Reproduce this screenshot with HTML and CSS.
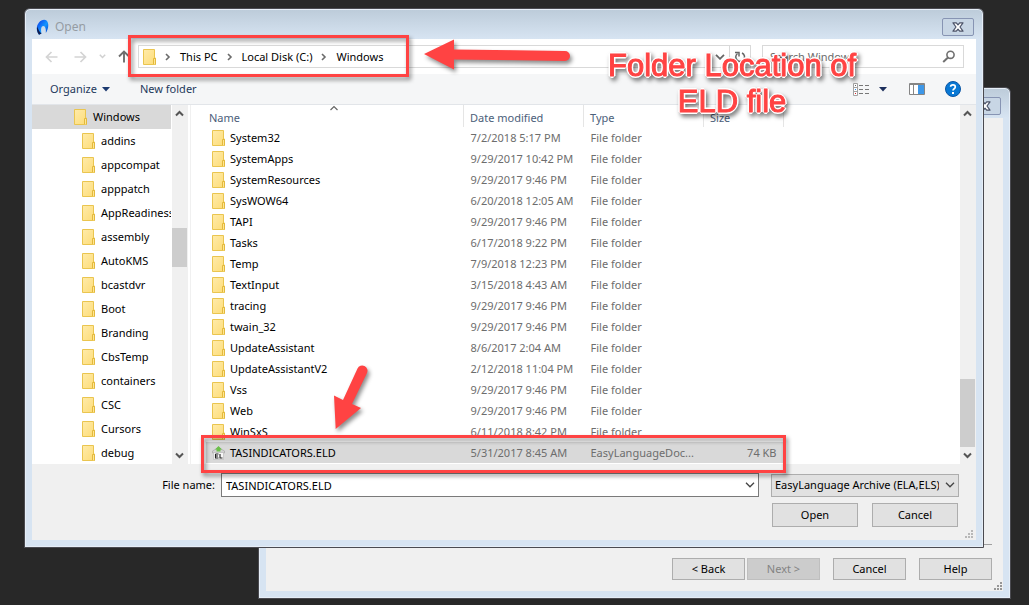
FILE: index.html
```html
<!DOCTYPE html>
<html lang="en">
<head>
<meta charset="utf-8">
<title>Open</title>
<link rel="stylesheet" href="styles.css">
</head>
<body>
<svg class="defs" aria-hidden="true">
  <defs>
    <linearGradient id="folder-fill" x1="0" y1="0" x2="1" y2="1"><stop offset="0" stop-color="#ffebaa"/><stop offset="1" stop-color="#fddc77"/></linearGradient>
    <symbol id="folder" viewBox="0 0 13 16"><path d="M.5 .5H11.500V9H12.500V15.500H.5Z" fill="url(#folder-fill)" stroke="#eac54f"/><path d="M10.500 15V9.500H12.500V15.500" fill="#ffe694" stroke="#e3b93c"/></symbol>
    <symbol id="crumb" viewBox="0 0 6 8"><path d="M1 1L4 4L1 7" fill="none" stroke="#6b6b6b" stroke-width="1.600"/></symbol>
    <symbol id="down" viewBox="0 0 10 6"><path d="M1 .8L5 4.800L9 .8" fill="none" stroke="currentColor" stroke-width="1.300"/></symbol>
    <symbol id="scroll-up" viewBox="0 0 9 7"><path d="M1 5.500L4.500 2L8 5.500" fill="none" stroke="#555" stroke-width="2"/></symbol>
    <symbol id="scroll-down" viewBox="0 0 9 7"><path d="M1 1.500L4.500 5L8 1.500" fill="none" stroke="#555" stroke-width="2"/></symbol>
    <symbol id="close" viewBox="0 0 12 10"><path d="M1 .8H4.300L6 2.800L7.700 .8H11L8 5L11 9.200H7.700L6 7.200L4.300 9.200H1L4 5Z" fill="#fff" stroke="#4b5268" stroke-width="1.200" stroke-linejoin="round"/></symbol>
    <symbol id="grip" viewBox="0 0 9 9"><path d="M6 0h2v2h-2zM3 3h2v2h-2zM6 3h2v2h-2zM0 6h2v2h-2zM3 6h2v2h-2zM6 6h2v2h-2z" fill="currentColor"/></symbol>
  </defs>
</svg>

<main class="desktop">
  <section class="window wizard" aria-label="Import wizard">
    <header class="titlebar"><span></span><button class="close" aria-label="Close wizard"><svg><use href="#close"/></svg></button></header>
    <div class="client wizard-client">
      <div class="wizard-buttons">
        <button class="btn">&lt; Back</button>
        <button class="btn" disabled>Next &gt;</button>
        <button class="btn apart">Cancel</button>
        <button class="btn apart">Help</button>
      </div>
      <svg class="grip"><use href="#grip"/></svg>
    </div>
  </section>

  <section class="window dialog" role="dialog" aria-labelledby="dialog-title">
    <header class="titlebar">
      <span class="title"><svg class="logo" viewBox="0 0 13 17"><defs><linearGradient id="lg" x1="0" y1="0" x2="1" y2="1"><stop offset="0" stop-color="#0a35e8"/><stop offset=".55" stop-color="#1596ff"/><stop offset="1" stop-color="#0530c8"/></linearGradient></defs><path d="M3 15.800C0 12 0 7 3 3.500C5 1 8.500 0 10.500 1.500C13 4 13 9 9.800 14C10.300 10.500 9.300 7 7.300 7C4.800 7.200 4.800 11 5.500 14.500Z" fill="url(#lg)"/><path d="M3 15.800C1 13 .5 10 1.300 7.500C2 10 3.500 13 5.500 14.500Z" fill="#101c50"/></svg><span id="dialog-title">Open</span></span>
      <button class="close" aria-label="Close"><svg><use href="#close"/></svg></button>
    </header>
    <div class="client">
      <nav class="navbar" aria-label="Location">
        <div class="history">
          <button aria-label="Back"><svg width="13" height="12" viewBox="0 0 13 12"><path d="M12.500 6H1.500M6.500 1L1.500 6L6.500 11" fill="none" stroke="#d4d4d4" stroke-width="1.700"/></svg></button>
          <button aria-label="Forward"><svg width="13" height="12" viewBox="0 0 13 12"><path d="M.5 6H11.500M6.500 1L11.500 6L6.500 11" fill="none" stroke="#d4d4d4" stroke-width="1.700"/></svg></button>
          <button aria-label="Recent locations" class="recent"><svg width="7" height="5" viewBox="0 0 7 5"><path d="M.8 .8L3.500 3.500L6.200 .8" fill="none" stroke="#d0d0d0" stroke-width="1.500"/></svg></button>
          <button aria-label="Up"><svg width="12" height="13" viewBox="0 0 12 13"><path d="M6 12.500V1.500M1 6.500L6 1.500L11 6.500" fill="none" stroke="#6e6e6e" stroke-width="1.900"/></svg></button>
        </div>
        <div class="address">
          <svg class="folder"><use href="#folder"/></svg>
          <svg class="crumb"><use href="#crumb"/></svg><a href="#">This PC</a>
          <svg class="crumb"><use href="#crumb"/></svg><a href="#">Local Disk (C:)</a>
          <svg class="crumb"><use href="#crumb"/></svg><a href="#">Windows</a>
          <button class="address-drop" aria-label="Previous locations"><svg width="10" height="6" viewBox="0 0 10 6"><path d="M1 .8L5 4.800L9 .8" fill="none" stroke="#666" stroke-width="1.800"/></svg></button>
          <button class="refresh" aria-label="Refresh"><svg width="12" height="12" viewBox="0 0 12 12"><path d="M8 2A4.400 4.400 0 1 1 3.500 2.500" fill="none" stroke="#666" stroke-width="1.500"/><path d="M1 1.500H5V5.500" fill="none" stroke="#666" stroke-width="1.500"/></svg></button>
        </div>
        <div class="search">
          <input type="search" placeholder="Search Windows" aria-label="Search Windows">
          <svg width="14" height="13" viewBox="0 0 14 13"><circle cx="8.500" cy="4.800" r="3.600" fill="none" stroke="#707070" stroke-width="1.600"/><path d="M6 7.500L1.200 12" stroke="#707070" stroke-width="2"/></svg>
        </div>
      </nav>

      <div class="toolbar">
        <button class="tool">Organize <svg width="8" height="5" viewBox="0 0 8 5"><path d="M0 0H8L4 4.500Z" fill="#1c3a70"/></svg></button>
        <button class="tool">New folder</button>
        <span class="spacer"></span>
        <button class="tool view" aria-label="Change your view"><svg width="17" height="13" viewBox="0 0 17 13"><path d="M.5 .5H4.500V12.500H.5ZM.5 4.500H4.500M.5 8.500H4.500" fill="#fff" stroke="#a3a3a3"/><path d="M2 2h1v1h-1z" fill="#666"/><path d="M2 6h1v1h-1z" fill="#2684e8"/><path d="M2 10h1v1h-1z" fill="#d22"/><path d="M6 2.500H10M12 2.500H16M6 6.500H10M12 6.500H16M6 10.500H10M12 10.500H16" stroke="#777"/></svg><svg width="8" height="5" viewBox="0 0 8 5"><path d="M0 0H8L4 4.500Z" fill="#1c2f5c"/></svg></button>
        <button class="tool" aria-label="Show the preview pane"><svg width="16" height="12" viewBox="0 0 16 12"><path d="M.5 .5H15.500V11.500H.5Z" fill="#fff" stroke="#858585"/><path d="M1 1.500H15M4.500 2V11" stroke="#858585"/><path d="M9 2H15V11H9Z" fill="#3d97e8"/></svg></button>
        <button class="tool help" aria-label="Help"><svg width="16" height="16" viewBox="0 0 16 16"><circle cx="8" cy="8" r="7.500" fill="#0878d4" stroke="#0a55a4"/><path d="M5.600 5.800C5.700 3.300 10.300 3.200 10.300 6C10.300 7.800 8 7.600 8 9.600" fill="none" stroke="#fff" stroke-width="1.700"/><path d="M7 11h2v2h-2z" fill="#fff"/></svg></button>
      </div>

      <div class="browser">
        <ul class="tree">
          <li class="root"><svg class="folder"><use href="#folder"/></svg>Windows</li>
          <li><svg class="folder"><use href="#folder"/></svg>addins</li>
          <li><svg class="folder"><use href="#folder"/></svg>appcompat</li>
          <li><svg class="folder"><use href="#folder"/></svg>apppatch</li>
          <li><svg class="folder"><use href="#folder"/></svg>AppReadiness</li>
          <li><svg class="folder"><use href="#folder"/></svg>assembly</li>
          <li><svg class="folder"><use href="#folder"/></svg>AutoKMS</li>
          <li><svg class="folder"><use href="#folder"/></svg>bcastdvr</li>
          <li><svg class="folder"><use href="#folder"/></svg>Boot</li>
          <li><svg class="folder"><use href="#folder"/></svg>Branding</li>
          <li><svg class="folder"><use href="#folder"/></svg>CbsTemp</li>
          <li><svg class="folder"><use href="#folder"/></svg>containers</li>
          <li><svg class="folder"><use href="#folder"/></svg>CSC</li>
          <li><svg class="folder"><use href="#folder"/></svg>Cursors</li>
          <li><svg class="folder"><use href="#folder"/></svg>debug</li>
        </ul>
        <div class="scrollbar tree-scroll"><svg><use href="#scroll-up"/></svg><div class="track"><span class="thumb"></span></div><svg><use href="#scroll-down"/></svg></div>
        <div class="files">
          <table>
            <colgroup><col class="c-name"><col class="c-date"><col class="c-type"><col class="c-size"></colgroup>
            <thead><tr><th>Name<svg class="sort" viewBox="0 0 10 6"><path d="M1.500 5L5 1.500L8.500 5" fill="none" stroke="#666" stroke-width="1.200"/></svg></th><th>Date modified</th><th>Type</th><th>Size</th></tr></thead>
            <tbody>
              <tr><td><span><svg class="folder"><use href="#folder"/></svg>System32</span></td><td>7/2/2018 5:17 PM</td><td>File folder</td><td></td></tr>
              <tr><td><span><svg class="folder"><use href="#folder"/></svg>SystemApps</span></td><td>9/29/2017 10:42 PM</td><td>File folder</td><td></td></tr>
              <tr><td><span><svg class="folder"><use href="#folder"/></svg>SystemResources</span></td><td>9/29/2017 9:46 PM</td><td>File folder</td><td></td></tr>
              <tr><td><span><svg class="folder"><use href="#folder"/></svg>SysWOW64</span></td><td>6/20/2018 12:05 AM</td><td>File folder</td><td></td></tr>
              <tr><td><span><svg class="folder"><use href="#folder"/></svg>TAPI</span></td><td>9/29/2017 9:46 PM</td><td>File folder</td><td></td></tr>
              <tr><td><span><svg class="folder"><use href="#folder"/></svg>Tasks</span></td><td>6/17/2018 9:22 PM</td><td>File folder</td><td></td></tr>
              <tr><td><span><svg class="folder"><use href="#folder"/></svg>Temp</span></td><td>7/9/2018 12:23 PM</td><td>File folder</td><td></td></tr>
              <tr><td><span><svg class="folder"><use href="#folder"/></svg>TextInput</span></td><td>3/15/2018 4:43 AM</td><td>File folder</td><td></td></tr>
              <tr><td><span><svg class="folder"><use href="#folder"/></svg>tracing</span></td><td>9/29/2017 9:46 PM</td><td>File folder</td><td></td></tr>
              <tr><td><span><svg class="folder"><use href="#folder"/></svg>twain_32</span></td><td>9/29/2017 9:46 PM</td><td>File folder</td><td></td></tr>
              <tr><td><span><svg class="folder"><use href="#folder"/></svg>UpdateAssistant</span></td><td>8/6/2017 2:04 AM</td><td>File folder</td><td></td></tr>
              <tr><td><span><svg class="folder"><use href="#folder"/></svg>UpdateAssistantV2</span></td><td>2/12/2018 11:04 PM</td><td>File folder</td><td></td></tr>
              <tr><td><span><svg class="folder"><use href="#folder"/></svg>Vss</span></td><td>9/29/2017 9:46 PM</td><td>File folder</td><td></td></tr>
              <tr><td><span><svg class="folder"><use href="#folder"/></svg>Web</span></td><td>9/29/2017 9:46 PM</td><td>File folder</td><td></td></tr>
              <tr><td><span><svg class="folder"><use href="#folder"/></svg>WinSxS</span></td><td>6/11/2018 8:42 PM</td><td>File folder</td><td></td></tr>
              <tr class="selected"><td><span><svg class="folder" viewBox="0 0 13 16"><path d="M.5 6L6.500 2.500L12.500 6V8H.5Z" fill="#d2d2d2" stroke="#a8a8a8" stroke-width=".7"/><path d="M1.500 7.500H11.500V14.500H1.500Z" fill="#f6f6f6" stroke="#b5b5b5" stroke-width=".6"/><path d="M6.500 1L10 4.500H8.500V6.500H4.500V4.500H3Z" fill="#6cc04a"/><path d="M3.500 9V13H6.500M3.500 9H6.500M3.500 11H6M8 9V13H10.500" fill="none" stroke="#222" stroke-width="1.100"/></svg>TASINDICATORS.ELD</span></td><td>5/31/2017 8:45 AM</td><td>EasyLanguageDoc...</td><td>74 KB</td></tr>
            </tbody>
          </table>
        </div>
        <div class="scrollbar file-scroll"><svg><use href="#scroll-up"/></svg><div class="track"><span class="thumb"></span></div><svg><use href="#scroll-down"/></svg></div>
      </div>

      <form class="footer">
        <label for="filename">File name:</label>
        <div class="combo"><input id="filename" type="text" value="TASINDICATORS.ELD"><svg class="chev"><use href="#down"/></svg></div>
        <div class="combo filter"><select aria-label="File type"><option>EasyLanguage Archive (ELA,ELS)</option></select><svg class="chev"><use href="#down"/></svg></div>
        <div class="actions"><button type="button" class="btn">Open</button><button type="button" class="btn">Cancel</button></div>
        <svg class="grip"><use href="#grip"/></svg>
      </form>
    </div>
  </section>

  <div class="mark mark-address"></div>
  <div class="mark mark-file"></div>
  <svg class="arrow arrow-left" viewBox="0 0 150 34"><path d="M4 16L34 1.500V11.500L145 13A5 5 0 0 1 145 23L34 21.500V31.500Z" fill="#ff4343"/></svg>
  <svg class="arrow arrow-down" viewBox="0 0 38 70"><path d="M5.700 67L4 33.500L13 38L27.500 6.500A5 5 0 0 1 37 11L22 42L31 46Z" fill="#ff4343"/></svg>
  <p class="note">Folder Location of<br>ELD file</p>
</main>
</body>
</html>
```
FILE: styles.css
```css
* { box-sizing: border-box; }
body {
  margin: 0;
  background: #282828;
  color: #000;
  font: 11px/16px "Noto Sans", "Open Sans", sans-serif;
}
button, input, select { font: inherit; color: inherit; margin: 0; }
button { padding: 0; border: 0; background: none; }
svg { display: block; flex: none; }
.defs { position: absolute; width: 0; height: 0; }
.desktop { position: relative; min-height: 100vh; overflow: hidden; }

/* Windows */
.window {
  position: absolute;
  display: flex;
  flex-direction: column;
  padding: 0 7px 7px;
  border: 1px solid #4a4a50;
  border-radius: 6px 6px 0 0;
  background: #d7e4f2 linear-gradient(#bccbd9, #d7e4f2 30px) no-repeat;
  box-shadow: inset 0 0 0 1px #e6eef7;
}
.dialog { left: 24px; right: 45px; top: 8px; }
.wizard { left: 258px; right: 18px; top: 87px; bottom: 6px; }
.titlebar {
  display: flex;
  align-items: center;
  justify-content: space-between;
  height: 30px;
  padding: 6px 2px 0 4px;
  color: #969ca3;
}
.title { display: flex; align-items: center; gap: 6px; font-size: 12px; }
.logo { width: 13px; height: 17px; }
.close {
  display: grid;
  place-items: center;
  width: 32px;
  height: 18px;
  border: 1px solid #8794b3;
  border-radius: 2px;
  background: #c8d6e5;
}
.close svg { width: 12px; height: 10px; }
.client { background: #f0f0f0; }
.btn {
  height: 24px;
  border: 1px solid #adadad;
  background: #e1e1e1;
}
.btn:disabled { border-color: #bfbfbf; background: #ccc; color: #838383; }
.grip { position: absolute; right: 9px; bottom: 8px; width: 9px; height: 9px; color: #b8b8b8; }

/* Wizard */
.wizard-client { flex: 1; display: flex; flex-direction: column; justify-content: flex-end; padding: 0 11px 11px; }
.wizard-client .grip { right: 7px; bottom: 7px; color: #969696; }
.wizard-buttons { display: flex; justify-content: flex-end; gap: 2px; padding-top: 13px; border-top: 1px solid #a0a0a0; }
.wizard-buttons .btn { width: 73px; height: 22px; }
.wizard-buttons .apart { margin-left: 11px; }

/* Address row */
.navbar { display: flex; align-items: center; gap: 11px; height: 35px; padding: 0 12px; background: #fff; }
.history { display: flex; align-items: center; gap: 16px; padding-left: 1px; }
.history .recent { margin: 0 -4px; }
.address { flex: 1; display: flex; align-items: center; height: 23px; margin-left: -3px; padding-left: 4px; border: 1px solid #d9d9d9; }
.address a { color: #000; text-decoration: none; white-space: nowrap; }
.folder { width: 13px; height: 16px; }
.crumb { width: 6px; height: 8px; margin: 0 9px; }
.address-drop { margin-left: auto; padding: 0 4px; }
.refresh { display: grid; place-items: center; align-self: stretch; width: 21px; border-left: 1px solid #d9d9d9; }
.search { display: flex; align-items: center; width: 202px; height: 23px; padding: 0 7px; border: 1px solid #d9d9d9; }
.search input { flex: 1; min-width: 0; padding: 0; border: 0; outline: 0; background: none; appearance: none; }
.search input::placeholder { color: #6d6d6d; opacity: 1; }

/* Toolbar */
.toolbar { display: flex; align-items: center; height: 31px; padding: 0 15px 0 18px; gap: 22px; border-bottom: 1px solid #e2e5e9; background: #f5f6f7; }
.tool { display: flex; align-items: center; gap: 5px; color: #1e395b; }
.tool + .tool { margin-left: 8px; }
.spacer { flex: 1; }
.view { gap: 9px; }
.toolbar .help { margin-left: -2px; }
.toolbar .view + .tool { margin-left: 0; }

/* Folder tree and file list */
.browser { display: flex; height: 359px; overflow: hidden; background: #fff; }
.tree { width: 139px; margin: 0; padding: 0; overflow: hidden; list-style: none; }
.tree li { display: flex; align-items: center; gap: 6px; height: 24px; padding-left: 50px; white-space: nowrap; }
.tree .root { padding-left: 42px; background: #d9d9d9; }
.scrollbar { display: flex; flex-direction: column; width: 16px; background: #f0f0f0; }
.scrollbar > svg { width: 15px; height: 17px; padding: 5px 3px; }
.track { flex: 1; width: 15px; }
.thumb { display: block; background: #cdcdcd; }
.tree-scroll { margin-left: 1px; }
.tree-scroll .track { padding-top: 106px; }
.tree-scroll .thumb { height: 39px; }
.file-scroll .track { display: flex; flex-direction: column; justify-content: flex-end; }
.file-scroll .thumb { height: 68px; }
.files { flex: 1; min-width: 0; margin-left: 2px; padding-left: 15px; border-left: 1px solid #f0f0f0; overflow: hidden; }
table { width: 578px; border-collapse: collapse; table-layout: fixed; }
.c-date, .c-type { width: 120px; }
.c-size { width: 80px; }
th { position: relative; height: 22px; padding: 3px 0 0 6px; border-right: 1px solid #e5e5e5; color: #4c607a; font-weight: normal; text-align: left; line-height: 16px; }
th:first-child { padding-left: 3px; }
.sort { position: absolute; top: 0; left: 50%; width: 10px; height: 6px; margin-left: -6px; }
td { height: 21px; padding: 0 0 0 7px; color: #6d6d6d; line-height: 16px; white-space: nowrap; }
td:first-child { padding-left: 6px; color: #000; }
td span { display: flex; align-items: center; gap: 5px; }
td:last-child { padding-right: 7px; text-align: right; }
.selected { background: #d9d9d9; }

/* File name and actions */
.footer { display: grid; grid-template-columns: 183px 1fr 188px; column-gap: 6px; row-gap: 6px; padding: 9px 23px 13px 0; }
.footer label { align-self: center; text-align: right; }
.combo { display: grid; align-items: center; }
.combo > * { grid-area: 1 / 1; }
.combo input { width: 100%; height: 24px; padding: 0 20px 0 4px; border: 1px solid #7a7a7a; border-radius: 0; background: #fff; }
.combo select { width: 100%; height: 23px; padding: 0 19px 0 3px; border: 1px solid #adadad; border-radius: 0; background: #e1e1e1; appearance: none; }
.chev { justify-self: end; width: 10px; height: 6px; margin-right: 4px; color: #444; pointer-events: none; }
.filter { margin-left: 6px; margin-right: -6px; }
.actions { grid-column: 3; display: flex; justify-content: space-between; margin-left: 7px; margin-right: -5px; }
.actions .btn { width: 86px; }

/* Annotations drawn over the windows */
.mark { position: absolute; border: 3px solid #ff4343; filter: drop-shadow(2px 3px 2px rgba(0, 0, 0, .45)); pointer-events: none; }
.mark-address { left: 128px; top: 35px; width: 281px; height: 42px; }
.mark-file { left: 201px; top: 435px; width: 585px; height: 38px; }
.arrow { position: absolute; overflow: visible; filter: drop-shadow(2px 3px 2px rgba(0, 0, 0, .45)); pointer-events: none; }
.arrow-left { left: 420px; top: 38px; width: 150px; height: 34px; }
.arrow-down { left: 330px; top: 362px; width: 38px; height: 70px; }
.note {
  position: absolute;
  left: 608px;
  top: 48px;
  margin: 0;
  color: #ff4343;
  font: 31px/36px "Liberation Sans", Arial, sans-serif;
  text-align: center;
  white-space: nowrap;
  -webkit-text-stroke: 1px #ff4343;
  text-shadow: 2px 0 #fff, -2px 0 #fff, 0 2px #fff, 0 -2px #fff, 1px 1px #fff, -1px 1px #fff, 1px -1px #fff, -1px -1px #fff;
  filter: drop-shadow(2px 3px 2px rgba(0, 0, 0, .5));
  pointer-events: none;
}
```
